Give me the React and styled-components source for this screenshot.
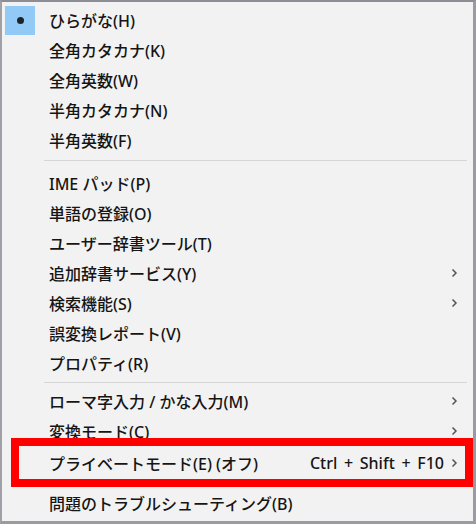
import React from "react";
import styled, { createGlobalStyle } from "styled-components";

const Global = createGlobalStyle`
  html, body { margin: 0; padding: 0; background: #f2f2f2; }
  body { font-family: "Noto Sans", "Noto Sans CJK JP", sans-serif; }
`;

const Menu = styled.div`
  box-sizing: border-box;
  width: 476px;
  height: 524px;
  background: #f2f2f2;
  border-top: 2px solid #8d8d95;
  border-left: 2px solid #a0a0a6;
  border-right: 3px solid #9a9aa0;
  border-bottom: 3px solid #9a9aa0;
  padding-top: 3px;
  display: flex;
  flex-direction: column;
  overflow: hidden;
`;

const Item = styled.div`
  position: relative;
  display: flex;
  align-items: center;
  height: 30px;
  flex-shrink: 0;
  margin-top: ${(p) => p.$gap || 0}px;
  padding-right: 15px;
  font-size: 16px;
  font-weight: 500;
  color: #151515;
  white-space: nowrap;

  ${(p) =>
    p.$marked &&
    `
    &::after {
      content: "";
      position: absolute;
      top: -10px;
      bottom: -9px;
      left: 9px;
      right: 0;
      border: 8px solid #ff0000;
      pointer-events: none;
    }
  `}
`;

const Gutter = styled.div`
  width: 47px;
  height: 100%;
  flex-shrink: 0;
  display: flex;
  align-items: center;
  justify-content: flex-start;
`;

const Check = styled.div`
  width: 30px;
  height: 29px;
  margin-left: 3px;
  background: #91c9f7;
  display: flex;
  align-items: center;
  justify-content: center;

  &::before {
    content: "";
    width: 7px;
    height: 7px;
    border-radius: 50%;
    background: #222;
  }
`;

const Label = styled.span`
  flex: 1;
`;

const Shortcut = styled.span`
  margin-right: 6px;
  word-spacing: 2.5px;
`;

const Arrow = styled.span`
  width: 8px;
  display: flex;
  justify-content: center;
`;

const Separator = styled.div`
  flex-shrink: 0;
  height: 1px;
  margin: ${(p) => p.$top}px 6px ${(p) => p.$bottom}px 42px;
  background: #d6d6d6;
`;

function Chevron() {
  return (
    <svg width="7" height="10" viewBox="0 0 7 10">
      <polyline points="1.5,1.5 5,5 1.5,8.5" fill="none" stroke="#555" strokeWidth="1.5" />
    </svg>
  );
}

function Row({ label, checked, sub, shortcut, gap, marked }) {
  return (
    <Item $gap={gap} $marked={marked}>
      <Gutter>{checked && <Check />}</Gutter>
      <Label>{label}</Label>
      {shortcut && <Shortcut>{shortcut}</Shortcut>}
      <Arrow>{sub && <Chevron />}</Arrow>
    </Item>
  );
}

export default function App() {
  return (
    <>
      <Global />
      <Menu>
        <Row label="ひらがな(H)" checked />
        <Row label="全角カタカナ(K)" />
        <Row label="全角英数(W)" />
        <Row label="半角カタカナ(N)" />
        <Row label="半角英数(F)" />
        <Separator $top={5} $bottom={7} />
        <Row label="IME パッド(P)" />
        <Row label="単語の登録(O)" />
        <Row label="ユーザー辞書ツール(T)" />
        <Row label="追加辞書サービス(Y)" sub />
        <Row label="検索機能(S)" sub />
        <Row label="誤変換レポート(V)" />
        <Row label="プロパティ(R)" />
        <Separator $top={4} $bottom={3} />
        <Row label="ローマ字入力 / かな入力(M)" sub />
        <Row label="変換モード(C)" sub />
        <Row label="プライベートモード(E) (オフ)" shortcut="Ctrl + Shift + F10" sub gap={2} marked />
        <Row label="問題のトラブルシューティング(B)" gap={10} />
      </Menu>
    </>
  );
}
